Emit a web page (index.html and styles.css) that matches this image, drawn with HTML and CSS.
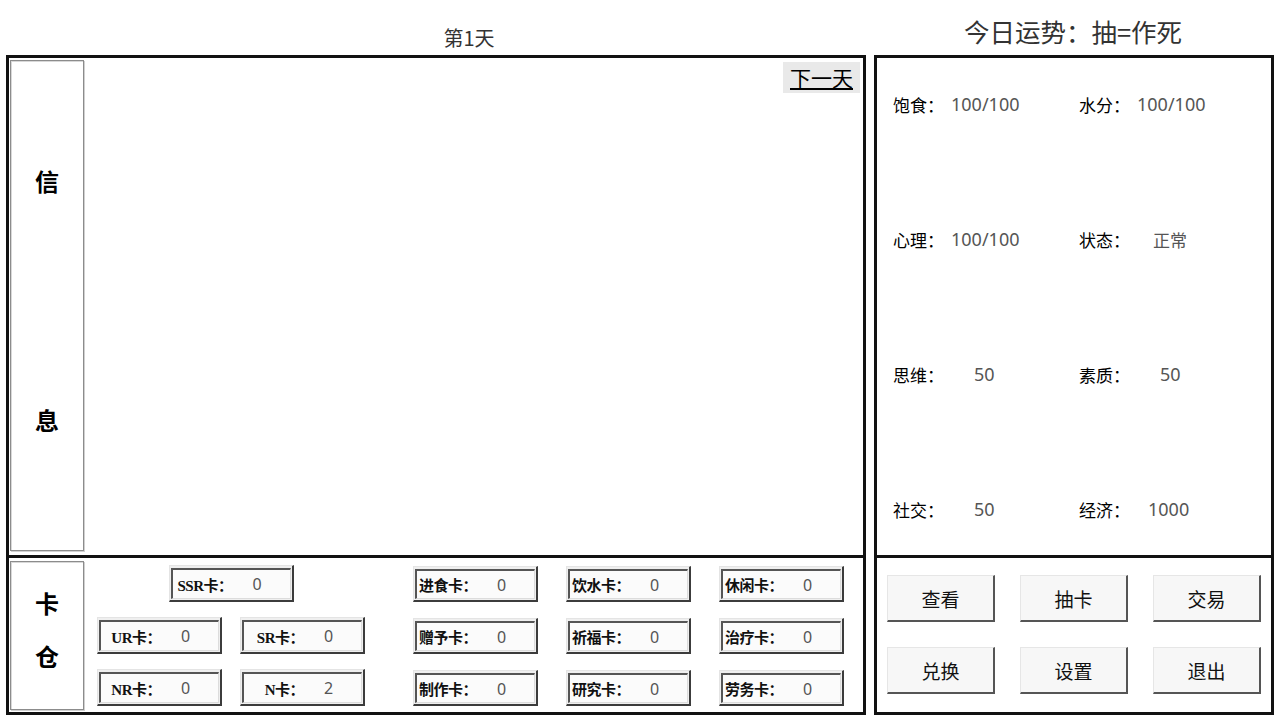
FILE: index.html
```html
<!DOCTYPE html>
<html lang="zh">
<head>
<meta charset="utf-8">
<title>第1天</title>
<link rel="stylesheet" href="styles.css">
</head>
<body>
<div class="page">
  <div class="header">
    <div class="day">第1天</div>
    <div class="luck">今日运势：抽=作死</div>
  </div>
  <div class="main">
    <div class="panel left">
      <div class="info">
        <div class="side side-info"><span>信</span><span>息</span></div>
        <div class="info-main">
          <button class="next">下一天</button>
        </div>
      </div>
      <div class="store">
        <div class="side side-store"><span>卡</span><span>仓</span></div>
        <div class="rarity">
          <div class="card ssr"><div class="card-in"><span class="cl">SSR卡：</span><span class="cv">0</span></div></div>
          <div class="card"><div class="card-in"><span class="cl">UR卡：</span><span class="cv">0</span></div></div>
          <div class="card"><div class="card-in"><span class="cl">SR卡：</span><span class="cv">0</span></div></div>
          <div class="card"><div class="card-in"><span class="cl">NR卡：</span><span class="cv">0</span></div></div>
          <div class="card"><div class="card-in"><span class="cl">N卡：</span><span class="cv">2</span></div></div>
        </div>
        <div class="kinds">
          <div class="card"><div class="card-in"><span class="cl">进食卡：</span><span class="cv">0</span></div></div>
          <div class="card"><div class="card-in"><span class="cl">饮水卡：</span><span class="cv">0</span></div></div>
          <div class="card"><div class="card-in"><span class="cl">休闲卡：</span><span class="cv">0</span></div></div>
          <div class="card"><div class="card-in"><span class="cl">赠予卡：</span><span class="cv">0</span></div></div>
          <div class="card"><div class="card-in"><span class="cl">祈福卡：</span><span class="cv">0</span></div></div>
          <div class="card"><div class="card-in"><span class="cl">治疗卡：</span><span class="cv">0</span></div></div>
          <div class="card"><div class="card-in"><span class="cl">制作卡：</span><span class="cv">0</span></div></div>
          <div class="card"><div class="card-in"><span class="cl">研究卡：</span><span class="cv">0</span></div></div>
          <div class="card"><div class="card-in"><span class="cl">劳务卡：</span><span class="cv">0</span></div></div>
        </div>
      </div>
    </div>
    <div class="panel right">
      <div class="stats">
        <div class="stat"><span class="sl">饱食：</span><span class="sv g-s">100/100</span></div>
        <div class="stat"><span class="sl">水分：</span><span class="sv g-s">100/100</span></div>
        <div class="stat"><span class="sl">心理：</span><span class="sv g-s">100/100</span></div>
        <div class="stat"><span class="sl">状态：</span><span class="sv g-l">正常</span></div>
        <div class="stat"><span class="sl">思维：</span><span class="sv g-xl">50</span></div>
        <div class="stat"><span class="sl">素质：</span><span class="sv g-xl">50</span></div>
        <div class="stat"><span class="sl">社交：</span><span class="sv g-xl">50</span></div>
        <div class="stat"><span class="sl">经济：</span><span class="sv g-m">1000</span></div>
      </div>
      <div class="actions">
        <button class="btn">查看</button>
        <button class="btn">抽卡</button>
        <button class="btn">交易</button>
        <button class="btn">兑换</button>
        <button class="btn">设置</button>
        <button class="btn">退出</button>
      </div>
    </div>
  </div>
</div>
</body>
</html>
```
FILE: styles.css
```css
* { box-sizing: border-box; }
html, body {
  margin: 0;
  padding: 0;
  background: #ffffff;
}
body {
  width: 1280px;
  height: 720px;
  overflow: hidden;
  font-family: "Noto Sans CJK SC", "Noto Sans", sans-serif;
  color: #111;
}
.page {
  padding-left: 6px;
  display: flex;
  flex-direction: column;
}
.header {
  display: flex;
  gap: 8px;
  height: 55px;
}
.day {
  width: 860px;
  padding-left: 66px;
  padding-top: 27px;
  text-align: center;
  font-size: 20px;
  line-height: 22px;
  color: #333;
}
.luck {
  width: 400px;
  padding-top: 16px;
  padding-right: 2px;
  text-align: center;
  font-size: 25.5px;
  line-height: 30px;
  color: #333;
}
.main {
  display: flex;
  gap: 8px;
}
.panel {
  height: 660px;
  border: 3px solid #111;
  display: flex;
  flex-direction: column;
}
.left { width: 860px; }
.right { width: 400px; }

.info {
  height: 497px;
  display: flex;
  padding: 2px 3px 4px 1px;
}
.side {
  width: 74px;
  border: 1px solid #8c8c8c;
  box-shadow: inset 1px 1px 0 #d8d8d8, 1px 1px 0 #d0d0d0;
  display: flex;
  flex-direction: column;
  align-items: center;
  justify-content: space-between;
  font-size: 24px;
  font-weight: bold;
  line-height: 26px;
  color: #000;
}
.side-info { padding: 107px 0 117px; }
.side-store { padding: 28px 0 40px; }
.info-main {
  flex: 1;
  display: flex;
  justify-content: flex-end;
  align-items: flex-start;
  padding-top: 2px;
}
.next {
  width: 77px;
  height: 31px;
  border: none;
  background: #e9e9e9;
  font-family: "Noto Sans CJK SC", sans-serif;
  font-size: 21px;
  line-height: 31px;
  padding: 0;
  color: #000;
  text-decoration: underline;
  text-underline-offset: 2px;
}

.store {
  flex: 1;
  border-top: 3px solid #111;
  display: flex;
  padding: 3px 0 2px 1px;
}
.rarity {
  margin-left: 13px;
  padding-top: 4px;
  display: grid;
  grid-template-columns: 125px 125px;
  grid-auto-rows: 37px;
  column-gap: 18px;
  row-gap: 15px;
  align-content: start;
}
.rarity .ssr {
  grid-column: 1 / 3;
  justify-self: center;
  width: 125px;
}
.kinds {
  margin-left: 48px;
  padding-top: 5px;
  display: grid;
  grid-template-columns: repeat(3, 125px);
  grid-auto-rows: 36px;
  column-gap: 28px;
  row-gap: 16px;
  align-content: start;
}
.card {
  border-style: solid;
  border-width: 1px 2px 2px 1px;
  border-color: #e4e4e4 #3c3c3c #3c3c3c #e4e4e4;
  background: #efefef;
  padding: 2px 1px 1px 1px;
}
.card-in {
  height: 100%;
  border-style: solid;
  border-width: 2px 1px 1px 2px;
  border-color: #555 #dcdcdc #dcdcdc #555;
  background: #fbfbfb;
  display: flex;
  align-items: center;
}
.cl {
  width: 60px;
  text-align: right;
  font-family: "Liberation Serif", "Noto Sans CJK SC", serif;
  font-weight: bold;
  font-size: 15px;
  letter-spacing: -0.5px;
  color: #111;
  white-space: nowrap;
}
.cv {
  margin-left: 20px;
  font-family: "Noto Sans", sans-serif;
  font-size: 16px;
  color: #555;
}

.stats {
  height: 497px;
  display: grid;
  grid-template-columns: 186px 186px;
  grid-auto-rows: 26px;
  row-gap: 109px;
  padding: 33px 0 0 16px;
  align-content: start;
}
.stat {
  display: flex;
  align-items: center;
  white-space: nowrap;
}
.sl {
  font-size: 17px;
  font-weight: 400;
  color: #000;
}
.sv {
  font-family: "Noto Sans", "Noto Sans CJK SC", sans-serif;
  font-size: 18px;
  color: #555;
}
.g-s { margin-left: 7px; }
.g-m { margin-left: 18px; }
.g-l { margin-left: 23px; font-family: "Noto Sans CJK SC", sans-serif; font-size: 17px; }
.g-xl { margin-left: 30px; }

.actions {
  flex: 1;
  border-top: 3px solid #111;
  display: grid;
  grid-template-columns: repeat(3, 108px);
  grid-auto-rows: 47px;
  column-gap: 25px;
  row-gap: 25px;
  padding: 17px 0 0 10px;
  align-content: start;
}
.btn {
  border-style: solid;
  border-width: 1px 2px 2px 1px;
  border-color: #e6e6e6 #555 #555 #e6e6e6;
  background: #f7f7f7;
  font-family: "Noto Sans CJK SC", sans-serif;
  font-size: 19px;
  color: #111;
  padding: 0;
}
```
